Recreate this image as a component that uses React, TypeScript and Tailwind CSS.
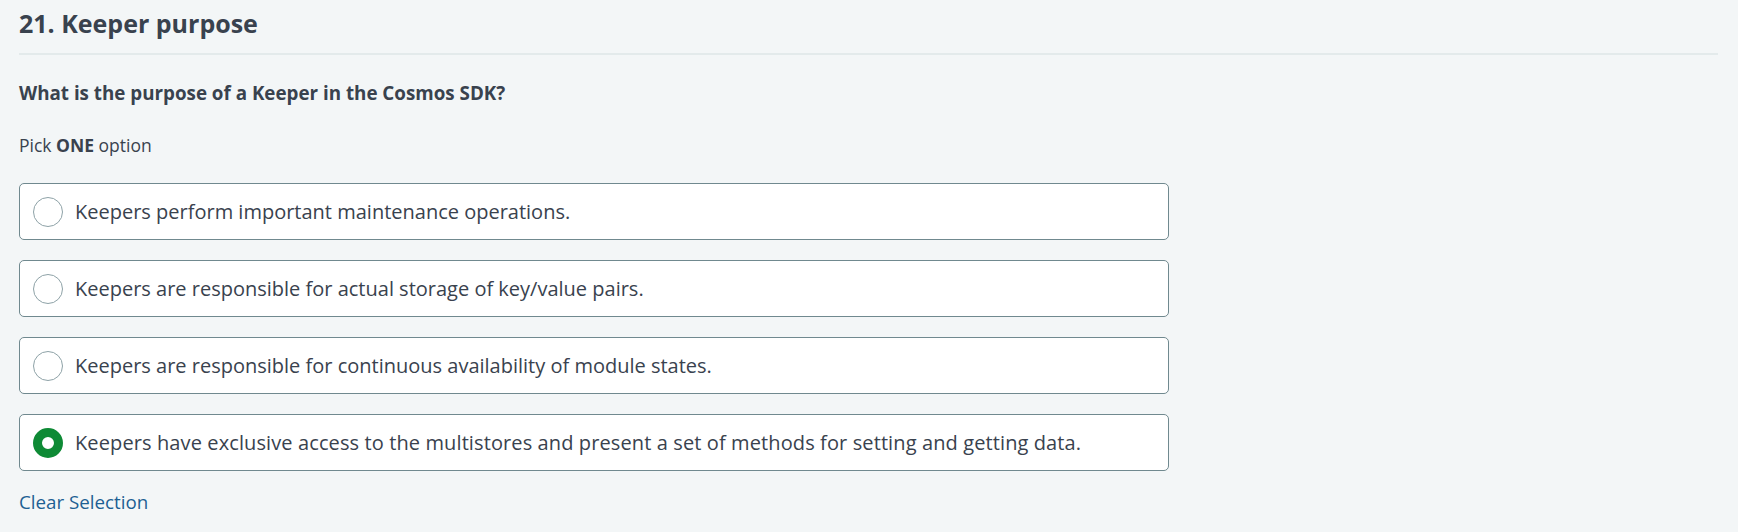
const options = [
  "Keepers perform important maintenance operations.",
  "Keepers are responsible for actual storage of key/value pairs.",
  "Keepers are responsible for continuous availability of module states.",
  "Keepers have exclusive access to the multistores and present a set of methods for setting and getting data.",
];

function Radio({ checked }: { checked: boolean }) {
  if (checked) {
    return <span className="block h-[30px] w-[30px] shrink-0 rounded-full border-[9px] border-[#0e8a35] bg-white" />;
  }
  return <span className="block h-[30px] w-[30px] shrink-0 rounded-full border border-[#8ea2a7] bg-white" />;
}

export default function App() {
  const selected = 3;

  return (
    <div className="min-h-screen bg-[#f3f6f7] pl-[19px] pr-[20px] text-[#39424e] font-['Open_Sans',sans-serif]">
      <h1 className="border-b-2 border-[#e3eaeb] pt-[5px] pb-[12px] text-[25px] font-bold leading-[36px]">
        21. Keeper purpose
      </h1>

      <p className="mt-[25px] text-[18.8px] font-bold leading-[26px]">
        What is the purpose of a Keeper in the Cosmos SDK?
      </p>

      <p className="mt-[27px] text-[17.5px] leading-[24px]">
        Pick <strong className="font-bold">ONE</strong> option
      </p>

      <div className="mt-[26px] flex w-[1150px] flex-col gap-[20px]">
        {options.map((text, i) => (
          <div
            key={i}
            className="flex h-[57px] items-center gap-[12px] rounded-[5px] border border-[#70898f] bg-white pl-[13px]"
          >
            <Radio checked={i === selected} />
            <span className={i === selected ? "text-[20px] leading-[28px] tracking-[0.11px]" : "text-[20px] leading-[28px]"}>
              {text}
            </span>
          </div>
        ))}
      </div>

      <p className="mt-[18px] text-[18.75px] leading-[26px] text-[#1d5f93]">Clear Selection</p>
    </div>
  );
}
